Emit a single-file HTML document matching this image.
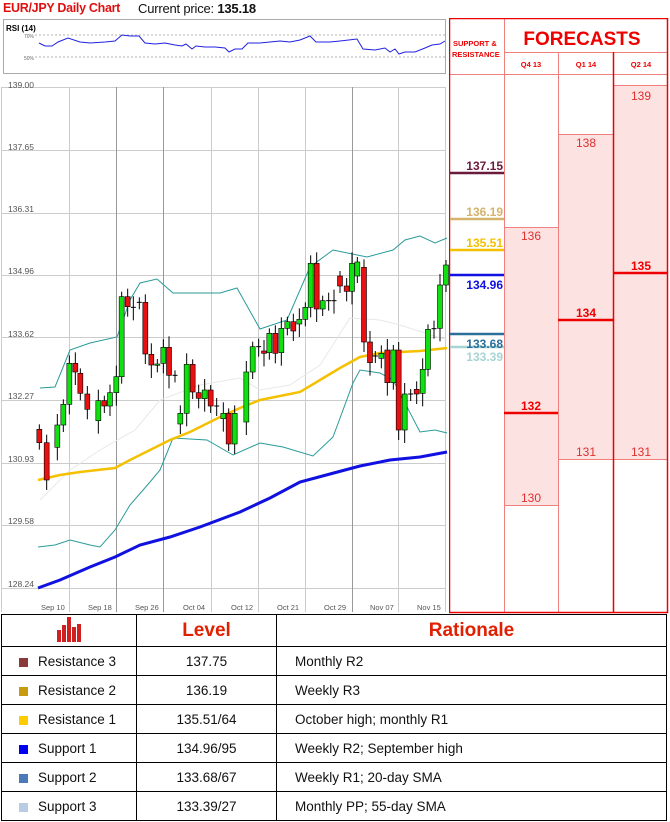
<!DOCTYPE html>
<html><head><meta charset="utf-8"><style>
*{margin:0;padding:0;box-sizing:border-box}
body{width:670px;height:822px;background:#fff;font-family:"Liberation Sans",sans-serif;position:relative;overflow:hidden}
.a{position:absolute;white-space:nowrap}
table{position:absolute;left:1px;top:614px;border-collapse:collapse;width:666px}
td{border:1.5px solid #000;font-size:13.5px;height:29px;color:#111}
.sw{display:inline-block;width:9px;height:9px;margin:0 10px 0 17px;vertical-align:-1px}
</style></head><body>
<div class="a" style="left:3px;top:1px;font-size:12.5px;font-weight:bold;color:#e01010;letter-spacing:-0.3px">EUR/JPY Daily Chart</div>
<div class="a" style="left:138px;top:1px;font-size:13px;color:#111;letter-spacing:-0.2px">Current price: <b>135.18</b></div>

<svg class="a" style="left:0;top:0" width="450" height="614" viewBox="0 0 450 614">
<rect x="3.5" y="19.5" width="442" height="54" fill="#fff" stroke="#aaa"/>
<text x="6" y="31" font-size="8" font-weight="bold" font-family="Liberation Sans">RSI (14)</text>
<line x1="35" y1="35" x2="445" y2="35" stroke="#999" stroke-dasharray="2,2" stroke-width="0.7"/>
<line x1="35" y1="57" x2="445" y2="57" stroke="#999" stroke-dasharray="2,2" stroke-width="0.7"/>
<text x="24" y="38" font-size="5" fill="#666">70%</text><text x="24" y="60" font-size="5" fill="#666">50%</text>
<polyline fill="none" stroke="#2020e0" stroke-width="1" points="39,43 45,46 52,46 58,42 68,38 80,42 90,43 105,42 115,41 122,35 130,36 139,36 145,43 155,44 165,43 175,45 182,46 186,44 192,49 196,46 205,47 215,47 225,48 229,52 235,49 242,49 248,43 260,43 270,42 280,41 290,42 300,40 310,36 316,42 330,42 340,41 357,39 363,49 375,50 385,48 390,52 395,49 399,54 405,52 415,52 425,48 432,45 440,44 445,41"/>
<g stroke="#ccc" stroke-width="1">
<line x1="1" y1="87.5" x2="445" y2="87.5"/><line x1="1" y1="150.5" x2="445" y2="150.5"/><line x1="1" y1="213.5" x2="445" y2="213.5"/><line x1="1" y1="275.5" x2="445" y2="275.5"/><line x1="1" y1="337.5" x2="445" y2="337.5"/><line x1="1" y1="400.5" x2="445" y2="400.5"/><line x1="1" y1="463.5" x2="445" y2="463.5"/><line x1="1" y1="525.5" x2="445" y2="525.5"/><line x1="1" y1="588.5" x2="445" y2="588.5"/>
<line x1="1.5" y1="87" x2="1.5" y2="612"/><line x1="69.5" y1="87" x2="69.5" y2="612"/><line x1="116.5" y1="87" x2="116.5" y2="612" stroke="#999"/><line x1="163.5" y1="87" x2="163.5" y2="612" stroke="#999"/><line x1="211.5" y1="87" x2="211.5" y2="612"/><line x1="258.5" y1="87" x2="258.5" y2="612"/><line x1="305.5" y1="87" x2="305.5" y2="612"/><line x1="352.5" y1="87" x2="352.5" y2="612" stroke="#999"/><line x1="398.5" y1="87" x2="398.5" y2="612"/><line x1="445.5" y1="87" x2="445.5" y2="612"/>
</g>
<g font-size="8.5" fill="#555" font-family="Liberation Sans">
<text x="8" y="88">139.00</text><text x="8" y="150">137.65</text><text x="8" y="212">136.31</text><text x="8" y="274">134.96</text><text x="8" y="337">133.62</text><text x="8" y="399">132.27</text><text x="8" y="462">130.93</text><text x="8" y="524">129.58</text><text x="8" y="587">128.24</text>
</g>
<g font-size="7.5" fill="#555" font-family="Liberation Sans">
<text x="41" y="610">Sep 10</text><text x="88" y="610">Sep 18</text><text x="135" y="610">Sep 26</text><text x="183" y="610">Oct 04</text><text x="231" y="610">Oct 12</text><text x="277" y="610">Oct 21</text><text x="324" y="610">Oct 29</text><text x="370" y="610">Nov 07</text><text x="417" y="610">Nov 15</text>
</g>
<polyline fill="none" stroke="#e8e8e8" stroke-width="1" points="40,500 70,470 100,450 135,430 160,400 200,385 240,378 260,390 290,385 320,365 350,318 380,320 400,325 447,340"/>
<polyline fill="none" stroke="#2a9a9a" stroke-width="1" points="40,388 55,387 70,350 90,343 117,337 130,300 140,283 157,279 173,293 220,293 237,288 260,329 287,320 310,267 333,250 367,257 393,250 405,240 420,236 435,243 447,238"/>
<polyline fill="none" stroke="#2a9a9a" stroke-width="1" points="38,547 55,545 70,540 90,545 100,547 115,530 130,505 150,482 160,470 173,438 207,440 233,455 260,443 283,447 313,456 333,437 353,383 360,370 380,373 393,380 420,432 435,430 447,433"/>
<polyline fill="none" stroke="#f5c000" stroke-width="2.5" points="38,480 60,475 80,472 115,468 130,460 150,450 170,440 190,432 200,427 220,417 240,408 260,400 280,396 300,392 320,380 340,368 360,357 380,353 400,352 420,351 447,348"/>
<polyline fill="none" stroke="#1010e0" stroke-width="3" points="38,588 60,580 90,567 115,557 140,545 170,537 200,527 240,512 270,498 300,482 330,474 360,466 390,460 420,457 447,452"/>
<g id="c"></g>
</svg>
<script>
var d=[[118,538,578,'r'],[140,578,690,'r'],[172,525,592,'g'],[190,463,525,'g'],[208,340,463,'g'],[226,340,366,'r'],[241,370,430,'r'],[262,432,478,'r'],[295,452,512,'g'],[313,452,468,'r'],[330,428,468,'g'],[349,380,428,'g'],[365,140,380,'g'],[383,140,170,'r'],[400,172,172,'d'],[418,157,157,'d'],[436,157,312,'r'],[454,313,345,'r'],[472,342,346,'g'],[490,292,340,'g'],[507,292,376,'r'],[525,376,376,'d'],[541,490,522,'g'],[560,343,490,'g'],[578,343,426,'r'],[596,428,445,'r'],[614,420,446,'g'],[632,420,468,'r'],[650,468,468,'d'],[670,490,506,'g'],[686,490,582,'r'],[704,490,582,'g'],[739,366,516,'g'],[758,290,366,'g'],[776,290,290,'d'],[792,303,310,'r'],[808,250,308,'g'],[826,250,310,'r'],[844,235,308,'g'],[862,215,235,'g'],[880,215,243,'r'],[898,208,222,'g'],[916,172,208,'g'],[932,40,172,'g'],[950,40,177,'r'],[968,152,177,'g'],[986,152,152,'d'],[1002,152,152,'d'],[1020,78,108,'r'],[1040,108,124,'r'],[1056,40,124,'g'],[1072,36,78,'g'],[1092,52,276,'r'],[1110,276,338,'r'],[1126,318,318,'d'],[1144,310,325,'g'],[1162,300,398,'r'],[1180,300,398,'g'],[1196,300,540,'r'],[1214,432,540,'g'],[1232,432,432,'d'],[1250,418,432,'r'],[1268,358,430,'g'],[1284,238,358,'g'],[1302,236,236,'d'],[1320,105,235,'g'],[1338,45,105,'g']];
var s='';d.forEach(function(c,i){var x=c[0]/3,t=250+c[1]/3,b=250+c[2]/3,w=(i%3)*3+5;
s+='<line x1="'+x+'" y1="'+(t-w)+'" x2="'+x+'" y2="'+(b+w+2)+'" stroke="#000" stroke-width="1"/>';
if(c[3]=='d')s+='<line x1="'+(x-2.5)+'" y1="'+t+'" x2="'+(x+2.5)+'" y2="'+t+'" stroke="#000"/>';
else s+='<rect x="'+(x-2.5)+'" y="'+t+'" width="5" height="'+Math.max(b-t,1)+'" fill="'+(c[3]=='g'?'#10e010':'#e81010')+'" stroke="#000" stroke-width="0.6"/>';});
document.getElementById('c').innerHTML=s;
</script>

<svg class="a" style="left:449px;top:18px" width="221" height="596" viewBox="449 18 221 596">
<rect x="558" y="134" width="55" height="325" fill="#fde2e2"/>
<rect x="504" y="227" width="54" height="278" fill="#fde2e2"/>
<rect x="613" y="85" width="55" height="374" fill="#fde2e2"/>
<g stroke="#f08080" stroke-width="1">
<line x1="504.5" y1="18" x2="504.5" y2="612"/><line x1="558.5" y1="52" x2="558.5" y2="612"/>
<line x1="504" y1="52.5" x2="668" y2="52.5"/><line x1="449" y1="74.5" x2="668" y2="74.5"/>
<line x1="504" y1="227.5" x2="558" y2="227.5"/><line x1="504" y1="505.5" x2="558" y2="505.5"/>
<line x1="558" y1="134.5" x2="613" y2="134.5"/><line x1="558" y1="459.5" x2="668" y2="459.5"/>
<line x1="613" y1="85.5" x2="668" y2="85.5"/>
</g>
<line x1="613.5" y1="52" x2="613.5" y2="612" stroke="#e00" stroke-width="1.5"/>
<rect x="449.5" y="18.5" width="218" height="594" fill="none" stroke="#e00" stroke-width="1.5"/>
<g stroke-width="2.5">
<line x1="504" y1="413" x2="558" y2="413" stroke="#e00"/><line x1="558" y1="320" x2="613" y2="320" stroke="#e00"/><line x1="613" y1="273" x2="668" y2="273" stroke="#e00"/>
<line x1="450" y1="173" x2="504" y2="173" stroke="#6a1a3a"/><line x1="450" y1="219" x2="504" y2="219" stroke="#d6b36a"/><line x1="450" y1="250" x2="504" y2="250" stroke="#f5c000"/><line x1="450" y1="275" x2="504" y2="275" stroke="#1010e0"/><line x1="450" y1="334" x2="504" y2="334" stroke="#2a6f9a"/><line x1="450" y1="347" x2="504" y2="347" stroke="#a8d4d4"/>
</g>
<g font-family="Liberation Sans" font-size="12" font-weight="bold" text-anchor="end">
<text x="503" y="170" fill="#6a1a3a">137.15</text><text x="503" y="216" fill="#d6b36a">136.19</text><text x="503" y="247" fill="#f5c000">135.51</text><text x="503" y="289" fill="#1010e0">134.96</text><text x="503" y="348" fill="#2a6f9a">133.68</text><text x="503" y="361" fill="#a8d4d4">133.39</text>
</g>
<g font-family="Liberation Sans" font-size="12" fill="#e03030" text-anchor="middle">
<text x="531" y="240">136</text><text x="531" y="502">130</text><text x="586" y="147">138</text><text x="586" y="456">131</text><text x="641" y="100">139</text><text x="641" y="456">131</text>
</g>
<g font-family="Liberation Sans" font-size="12" font-weight="bold" fill="#e00" text-anchor="middle">
<text x="531" y="410">132</text><text x="586" y="317">134</text><text x="641" y="270">135</text>
</g>
<text x="582" y="45" font-family="Liberation Sans" font-size="19" font-weight="bold" fill="#e00" text-anchor="middle">FORECASTS</text>
<g font-family="Liberation Sans" font-size="7.5" font-weight="bold" fill="#e00">
<text x="453" y="46">SUPPORT &amp;</text><text x="452" y="57">RESISTANCE</text>
<text x="531" y="67" text-anchor="middle">Q4 13</text><text x="586" y="67" text-anchor="middle">Q1 14</text><text x="641" y="67" text-anchor="middle">Q2 14</text>
</g>
</svg>

<table>
<tr style="height:32px"><td style="width:135px;text-align:center"><svg width="26" height="26" viewBox="0 0 26 26"><g fill="#d02020"><rect x="1" y="14" width="4" height="12"/><rect x="6" y="9" width="4" height="17"/><rect x="11" y="1" width="4" height="25"/><rect x="16" y="11" width="4" height="15"/><rect x="21" y="8" width="4" height="18"/></g></svg></td>
<td style="width:140px;text-align:center;color:#e02000;font-size:19px;font-weight:bold">Level</td>
<td style="text-align:center;color:#e02000;font-size:19px;font-weight:bold">Rationale</td></tr>
<tr><td><span class="sw" style="background:#8b3a3a"></span>Resistance 3</td><td style="text-align:center">137.75</td><td style="padding-left:18px">Monthly R2</td></tr>
<tr><td><span class="sw" style="background:#c89a10"></span>Resistance 2</td><td style="text-align:center">136.19</td><td style="padding-left:18px">Weekly R3</td></tr>
<tr><td><span class="sw" style="background:#ffcc00"></span>Resistance 1</td><td style="text-align:center">135.51/64</td><td style="padding-left:18px">October high; monthly R1</td></tr>
<tr><td><span class="sw" style="background:#0000ee"></span>Support 1</td><td style="text-align:center">134.96/95</td><td style="padding-left:18px">Weekly R2; September high</td></tr>
<tr><td><span class="sw" style="background:#4a7ab8"></span>Support 2</td><td style="text-align:center">133.68/67</td><td style="padding-left:18px">Weekly R1; 20-day SMA</td></tr>
<tr><td><span class="sw" style="background:#b8cce4"></span>Support 3</td><td style="text-align:center">133.39/27</td><td style="padding-left:18px">Monthly PP; 55-day SMA</td></tr>
</table>
</body></html>
